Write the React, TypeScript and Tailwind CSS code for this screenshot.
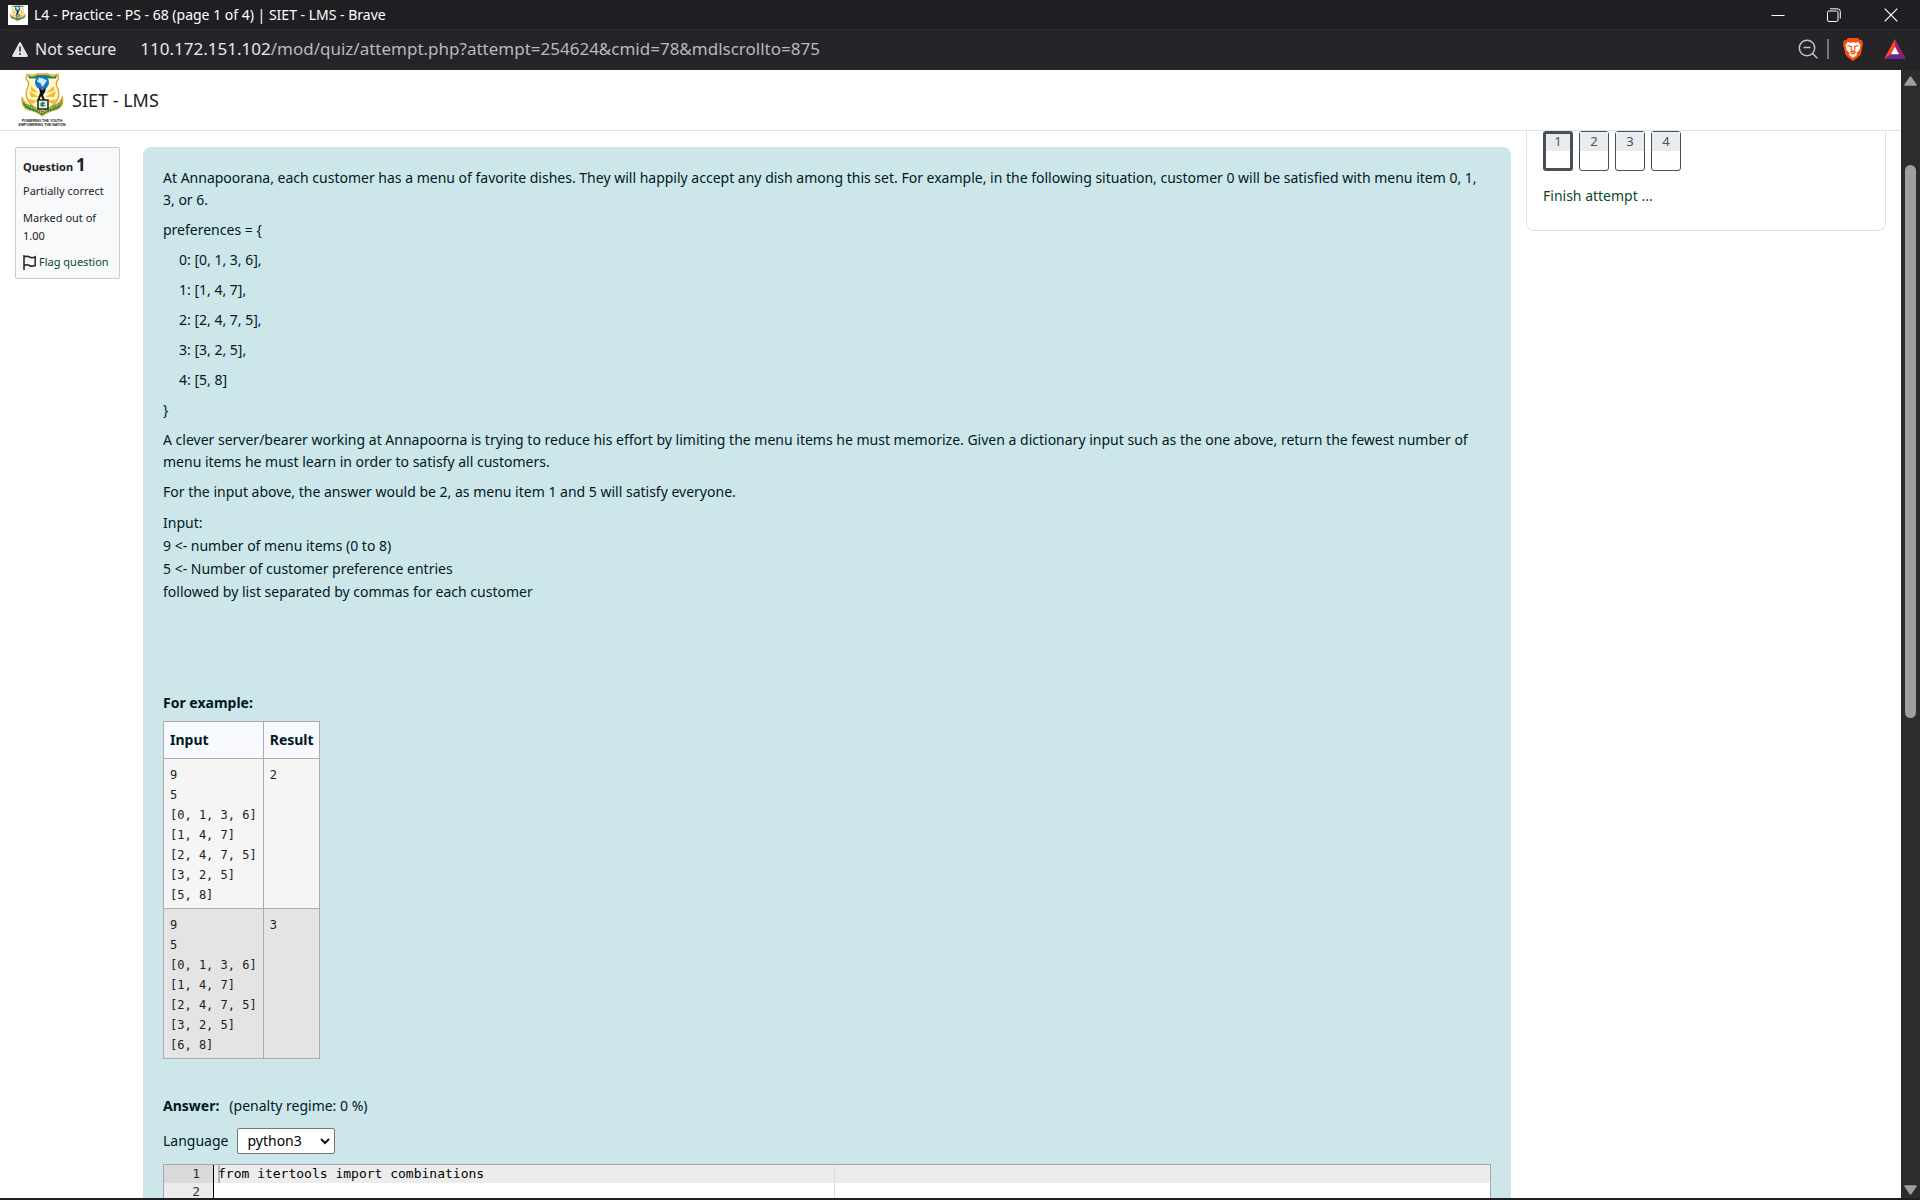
import { useState } from "react";

function Crest({ className, motto }: { className: string; motto?: boolean }) {
  return (
    <svg viewBox="0 0 46 54" className={className} role="img" aria-label="SIET crest">
      <path d="M2 24 Q1 35 9 37 Q18 39 22 43 Q27 39 35 37 Q44 35 42.500 24 Q40 30 35 32 L9 32 Q4 30 2 24Z" fill="#1f8b4c" stroke="#e9a820" strokeWidth="1.200" />
      <path d="M7 1.500 Q13 3 17 1 H28 Q32 3 38 1.500 L38.500 6 Q35 10 37 14 Q40 20 38 25 Q36 33 22.500 38 Q9 33 7 25 Q5 20 8 14 Q10 10 6 6Z" fill="#fdf6cf" stroke="#e2a31d" strokeWidth="1.300" />
      <path d="M8 2.500 Q13 4.500 17 2 H28 Q32 4.500 37 2.500 L36 5.500 H28 L22 4 L16 5.500 H9Z" fill="#1f8b4c" />
      <path d="M19 24 L9 18 L11 24Z M18 28 L8 26 L12 31Z M18 20 L11 13 L11 18Z M25 24 L36 18 L34 24Z M27 28 L37 26 L33 31Z M26 20 L34 13 L34 18Z" fill="#f5bd1f" />
      <path d="M3.500 28 Q7 34 15 35.500 L22 40 L30 35.500 Q38 34 41.500 28" fill="none" stroke="#f2d36b" strokeWidth="1.200" strokeDasharray="1.500 1" />
      <circle cx="22" cy="9.500" r="7" fill="#1773c4" />
      <path d="M19 4.500 L23 5.500 L27 7.500 L25 10.500 L22.500 14 L20.500 10.500 L17 8.500Z" fill="#c9e8fa" />
      <path d="M19 14.500 L22 17 L26 15 L25 19 L23 22 L25 27 H23 L21 23 L19 28 H17 L20 20Z" fill="#111" />
      <rect x="18" y="27" width="10" height="9" fill="#e9eee6" stroke="#161616" strokeWidth="1.400" />
      <path d="M20.500 30 Q23 28 25.500 30 L23 32 H26 Q23 35 20.500 33Z" fill="#1f8b4c" />
      {motto && (
        <g fontFamily="Liberation Sans, sans-serif" fontWeight="700" fontSize="3.500" fill="#111" textAnchor="middle">
          <text x="22" y="48.500">POWERING THE YOUTH</text>
          <text x="22" y="52.500">EMPOWERING THE NATION</text>
        </g>
      )}
    </svg>
  );
}

function TitleBar() {
  return (
    <div className="flex h-[29px] shrink-0 items-center bg-[#1f1e22] pl-2 text-white">
      <span className="mr-[6px] flex size-5 items-center justify-center bg-white">
        <Crest className="h-5 w-[18px]" />
      </span>
      <h1 className="grow text-[14px] leading-5">
        L4 - Practice - PS - 68 (page 1 of 4) | SIET - LMS - Brave
      </h1>
      <button aria-label="Minimize" className="flex h-full w-[56px] items-center justify-center">
        <svg className="h-[14px] w-[14px]" viewBox="0 0 14 14"><path d="M.5 7.500H13.500" stroke="#fff" /></svg>
      </button>
      <button aria-label="Restore" className="flex h-full w-[56px] items-center justify-center">
        <svg className="h-[14px] w-[14px]" viewBox="0 0 14 14" fill="none" stroke="#fff">
          <rect x=".5" y="3" width="10.500" height="10.500" rx="1.500" />
          <path d="M3 .8H10.500Q13.300 .8 13.300 3.500V10.500" />
        </svg>
      </button>
      <button aria-label="Close" className="flex h-full w-[58px] items-center justify-center">
        <svg className="h-[14px] w-[14px]" viewBox="0 0 14 14"><path d="M.7 .7L13.300 13.300M13.300 .7L.7 13.300" stroke="#fff" strokeWidth="1.200" /></svg>
      </button>
    </div>
  );
}

function AddressBar() {
  return (
    <div className="flex h-[41px] shrink-0 items-center border-t border-[#2c2c30] bg-[#252429] pr-[14px] pb-[2px] pl-3 text-[#e8e8ec]">
      <button className="flex items-center gap-[7px] text-[16px]">
        <svg className="h-[15px] w-4" viewBox="0 0 16 15">
          <path d="M8 1L15 14H1Z" fill="#e3e3e6" stroke="#e3e3e6" strokeWidth="1.800" strokeLinejoin="round" />
          <path d="M8 4.500V9.500M8 11V12.800" stroke="#252429" strokeWidth="1.600" />
        </svg>
        Not secure
      </button>
      <p className="ml-6 grow text-[17px] text-[#b9b9be]">
        <span className="text-[#e8e8ec]">110.172.151.102</span>/mod/quiz/attempt.php?attempt=254624&amp;cmid=78&amp;mdlscrollto=875
      </p>
      <button aria-label="Zoom out">
        <svg className="size-5" viewBox="0 0 20 20" fill="none" stroke="#c4c4c8" strokeWidth="1.500">
          <circle cx="9" cy="9" r="7.700" />
          <path d="M14.500 14.500L19.300 19.300M5.500 8.500H12.500" />
        </svg>
      </button>
      <span className="mx-[9px] h-5 w-[2px] bg-[#77767c]" />
      <button aria-label="Brave Shields" className="ml-1 flex h-6 w-[22px] items-center justify-center">
        <svg className="h-[23px] w-[20px]" viewBox="0 0 20 23">
          <path d="M5 0H15L17 2.200L19 2L20 6L17.500 17Q14 20.500 10 23Q6 20.500 2.500 17L0 6L1 2L3 2.200Z" fill="#fb4c0a" />
          <path d="M4.500 4L8 4.700L10 4L12 4.700L15.500 4L17.500 7.200L16.500 12L13.500 15L14 17L10 20L6 17L6.500 15L3.500 12L2.500 7.200Z" fill="#fff" />
          <path d="M4.500 7.500L8.500 8.600L8 11L9.200 13L7 14.500M15.500 7.500L11.500 8.600L12 11L10.800 13L13 14.500M7 14.500L10 13.400L13 14.500M7.800 16.200L10 15.200L12.200 16.200" fill="none" stroke="#fb4c0a" strokeWidth="1.100" />
        </svg>
      </button>
      <button aria-label="Brave Rewards" className="ml-5">
        <svg className="h-5 w-[22px]" viewBox="0 0 22 20">
          <path d="M11 0L0 20L7.500 15L11 8Z" fill="#ff4724" />
          <path d="M11 0L22 20L14.500 15L11 8Z" fill="#9e1f63" />
          <path d="M0 20H22L14.500 15H7.500Z" fill="#662d91" />
          <path d="M11 7.500L15 15.300H7Z" fill="#fff" />
        </svg>
      </button>
    </div>
  );
}

function QuestionInfo() {
  return (
    <aside className="h-fit w-[105px] shrink-0 rounded-[2px] border border-[#c5ccd6] bg-[#f8f9fb] px-[7px] pt-[5px] pb-[7px] text-[11px] leading-[18px] whitespace-nowrap text-[#1d2125]">
      <h2 className="text-[11px] leading-[24px] font-bold">
        Question <span className="text-[17px]">1</span>
      </h2>
      <p className="mt-[3px]">Partially correct</p>
      <p className="mt-[9px]">Marked out of<br />1.00</p>
      <a href="#flag" className="mt-2 flex items-center text-[#0a4a1f]">
        <svg className="mr-[3px] h-[15px] w-[13px] shrink-0" viewBox="0 0 13 15" fill="none" stroke="#222" strokeWidth="1.500">
          <path d="M1 0V15M1 2Q4 .5 6.500 2T12.200 1.800V10.500Q9 12 6.500 10.500T1 10.800" />
        </svg>
        Flag question
      </a>
    </aside>
  );
}

const preferences = ["0: [0, 1, 3, 6],", "1: [1, 4, 7],", "2: [2, 4, 7, 5],", "3: [3, 2, 5],", "4: [5, 8]"];

const examples = [
  { input: "9\n5\n[0, 1, 3, 6]\n[1, 4, 7]\n[2, 4, 7, 5]\n[3, 2, 5]\n[5, 8]", result: "2" },
  { input: "9\n5\n[0, 1, 3, 6]\n[1, 4, 7]\n[2, 4, 7, 5]\n[3, 2, 5]\n[6, 8]", result: "3" },
];

function Editor() {
  const [code, setCode] = useState("from itertools import combinations\n\n");
  return (
    <div className="flex h-[200px] border border-[#a3a7a8] bg-white font-['DejaVu_Sans_Mono',monospace] text-[13px] leading-[18px]">
      <div className="w-[50px] shrink-0 border-r border-black bg-[#ebebeb] text-right text-[#333]">
        <div className="bg-[#dadada] pr-[13px]">1</div>
        <div className="pr-[13px]">2</div>
      </div>
      <div className="relative grow">
        <div className="absolute inset-x-0 top-0 h-[18px] bg-[#ececec]" />
        <div className="absolute top-0 left-[4px] h-[18px] w-[2px] bg-[#b5b5b5]" />
        <div className="absolute inset-y-0 left-[620px] w-px bg-[#dcdcdc]" />
        <textarea
          aria-label="Answer code"
          value={code}
          onChange={(e) => setCode(e.target.value)}
          spellCheck={false}
          className="relative block h-full w-full resize-none bg-transparent pl-[4px] text-black outline-none"
        />
      </div>
    </div>
  );
}

function Question() {
  return (
    <section className="h-fit min-w-0 grow rounded-lg bg-[#cde6ea] p-5 text-[14px] leading-[22px] text-[#001a1e]">
      <div className="flex flex-col gap-2">
        <p>
          At Annapoorana, each customer has a menu of favorite dishes. They will happily accept any dish among this set. For
          example, in the following situation, customer 0 will be satisfied with menu item 0, 1, 3, or 6.
        </p>
        <p>preferences = {"{"}</p>
        {preferences.map((row) => (
          <p key={row} className="pl-4">{row}</p>
        ))}
        <p>{"}"}</p>
        <p>
          A clever server/bearer working at Annapoorna is trying to reduce his effort by limiting the menu items he must
          memorize. Given a dictionary input such as the one above, return the fewest number of menu items he must learn in
          order to satisfy all customers.
        </p>
        <p>For the input above, the answer would be 2, as menu item 1 and 5 will satisfy everyone.</p>
        <p className="leading-[23px]">
          Input:<br />
          9 &lt;- number of menu items (0 to 8)<br />
          5 &lt;- Number of customer preference entries<br />
          followed by list separated by commas for each customer
        </p>
      </div>
      <h3 className="mt-[89px] font-bold">For example:</h3>
      <table className="mt-[7px] border-collapse border border-[#adadad]">
        <thead>
          <tr className="bg-[#f8f8ff] text-left leading-[26px]">
            <th className="border border-[#adadad] px-[6px] py-[5px] font-bold">Input</th>
            <th className="border border-[#adadad] py-[5px] pr-[5px] pl-[6px] font-bold">Result</th>
          </tr>
        </thead>
        <tbody className="font-['DejaVu_Sans_Mono',monospace] text-[12px] leading-[20px] text-[#1d2125]">
          {examples.map((row) => (
            <tr key={row.input} className="bg-[#f5f5f5] align-top even:bg-[#e4e4e4]">
              <td className="border border-[#adadad] px-[6px] pt-[6px] pb-[3px] whitespace-pre">{row.input}</td>
              <td className="border border-[#adadad] px-[6px] pt-[6px] pb-[3px]">{row.result}</td>
            </tr>
          ))}
        </tbody>
      </table>
      <p className="mt-9">
        <b>Answer:</b>
        <span className="ml-[10px]">(penalty regime: 0 %)</span>
      </p>
      <div className="mt-[11px] mb-[10px] flex items-center">
        <label htmlFor="language">Language</label>
        <span className="relative ml-[9px]">
          <select
            id="language"
            defaultValue="python3"
            className="block h-[26px] w-[98px] appearance-none rounded-[2px] border border-[#767676] bg-white pl-[9px] text-black"
          >
            <option>python3</option>
            <option>c</option>
          </select>
          <svg className="pointer-events-none absolute top-[10px] right-[5px] h-[7px] w-[10px]" viewBox="0 0 10 7" fill="none" stroke="#111" strokeWidth="2">
            <path d="M1 1L5 5L9 1" />
          </svg>
        </span>
      </div>
      <Editor />
    </section>
  );
}

function QuizNavigation() {
  return (
    <nav aria-label="Quiz navigation" className="-mt-4 h-[100px] w-[360px] shrink-0 rounded-b-lg border border-t-0 border-[#dee2e6] px-4 text-[14px] leading-[22px]">
      <div className="flex gap-[6px]">
        {[1, 2, 3, 4].map((n) => (
          <a
            key={n}
            href={`#question-${n}`}
            className={`flex h-10 w-[30px] flex-col rounded-[3px] text-center text-[13px] text-[#495057] ${n === 1 ? "border-[3px] border-[#495057]" : "border border-[#495057]"}`}
          >
            <span className={`block bg-[#e9ecef] ${n === 1 ? "h-[17px] leading-[14px]" : "h-[19px] leading-[18px]"}`}>{n}</span>
          </a>
        ))}
      </div>
      <a href="#finish" className="mt-[14px] inline-block text-[#0a4a1f]">Finish attempt ...</a>
    </nav>
  );
}

function Scrollbar() {
  return (
    <div className="flex w-[19px] shrink-0 flex-col items-center bg-[#2c2c2c] pt-[6px] pb-[3px]">
      <svg className="h-[10px] w-[13px] shrink-0" viewBox="0 0 13 10"><path d="M6.500 1L12 9H1Z" fill="#9f9f9f" stroke="#9f9f9f" strokeWidth="1.500" strokeLinejoin="round" /></svg>
      <div className="mt-[79px] h-[553px] w-[11px] rounded-full bg-[#9f9f9f]" />
      <svg className="mt-auto h-[10px] w-[13px] shrink-0" viewBox="0 0 13 10"><path d="M6.500 9L12 1H1Z" fill="#9f9f9f" stroke="#9f9f9f" strokeWidth="1.500" strokeLinejoin="round" /></svg>
    </div>
  );
}

export default function App() {
  return (
    <div className="flex h-screen flex-col overflow-hidden border-b-2 border-[#1f1e22] bg-white font-['Noto_Sans',sans-serif]">
      <TitleBar />
      <AddressBar />
      <div className="flex min-h-0 grow">
        <div className="flex min-w-0 grow flex-col">
          <header className="flex h-[61px] shrink-0 items-center border-b border-[#dee2e6] pl-5">
            <a href="#home" className="flex items-center gap-[6px] text-[18px] text-[#1d2125]">
              <Crest motto className="h-[54px] w-[46px] overflow-visible" />
              SIET - LMS
            </a>
          </header>
          <main className="flex min-h-0 grow overflow-hidden px-[15px] pt-4">
            <QuestionInfo />
            <div className="ml-[23px] flex min-w-0 grow gap-[15px]">
              <Question />
              <QuizNavigation />
            </div>
          </main>
        </div>
        <Scrollbar />
      </div>
    </div>
  );
}
